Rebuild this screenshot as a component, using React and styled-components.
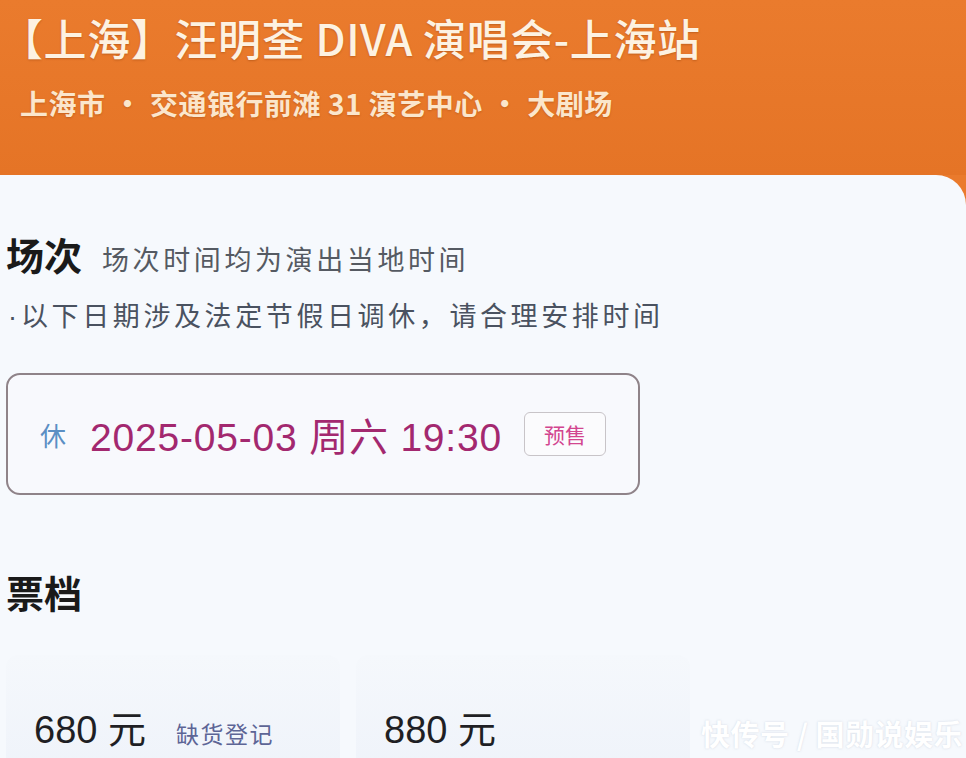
import React from 'react';
import styled, { createGlobalStyle } from 'styled-components';

const GlobalStyle = createGlobalStyle`
  html, body {
    margin: 0;
    padding: 0;
    background: #e9772a;
  }
  body {
    font-family: "Noto Sans CJK SC", "Noto Sans", sans-serif;
  }
`;

const Page = styled.div`
  width: 966px;
  height: 758px;
  overflow: hidden;
  position: relative;
  background: #ea7a2c;
`;

const Header = styled.header`
  height: 175px;
  box-sizing: border-box;
  padding: 7px 0 0 0;
  background: linear-gradient(180deg, #ea7b2d 0%, #e57426 100%);
`;

const Title = styled.h1`
  margin: 0;
  font-size: 43px;
  font-weight: 500;
  line-height: 60px;
  color: #fdf2e2;
  letter-spacing: 0.6px;
  text-shadow: 0 1px 2px rgba(120, 50, 0, 0.35);
`;

const Venue = styled.div`
  margin: 16px 0 0 20px;
  font-size: 28px;
  font-weight: 700;
  line-height: 40px;
  color: #fbe6cc;
  letter-spacing: 0.5px;
  text-shadow: 0 1px 2px rgba(120, 50, 0, 0.3);
`;

const Sep = styled.span`
  margin: 0 8px;
`;

const Card = styled.main`
  height: 583px;
  background: #f6f9fd;
  border-top-right-radius: 30px;
  padding: 54px 0 0 6px;
  box-sizing: border-box;
`;

const SectionRow = styled.div`
  display: flex;
  align-items: baseline;
  gap: 20px;
`;

const SectionTitle = styled.h2`
  margin: 0;
  font-size: 38px;
  font-weight: 700;
  color: #1a1a1a;
  line-height: 50px;
`;

const Hint = styled.span`
  font-size: 27px;
  color: #555a62;
  letter-spacing: 3.6px;
`;

const Notice = styled.p`
  margin: 16px 0 0 2px;
  font-size: 27px;
  color: #4a5260;
  letter-spacing: 3.6px;
  line-height: 40px;
`;

const Dot = styled.span`
  font-family: "Liberation Sans", sans-serif;
  letter-spacing: 0;
  margin-right: 4px;
`;

const Session = styled.div`
  margin-top: 36px;
  width: 634px;
  height: 122px;
  box-sizing: border-box;
  border: 2px solid #8f8389;
  border-radius: 14px;
  display: flex;
  align-items: center;
  padding-left: 32px;
  gap: 24px;
  background: #f8f9fd;
`;

const Rest = styled.span`
  font-size: 26px;
  color: #5b8fc4;
`;

const DateText = styled.span`
  font-family: "Liberation Sans", "Noto Sans CJK SC", sans-serif;
  font-size: 39px;
  color: #a3286f;
  letter-spacing: 0.8px;
`;

const Tag = styled.span`
  margin-left: -2px;
  width: 82px;
  height: 44px;
  box-sizing: border-box;
  border: 1.5px solid #c8c4c8;
  border-radius: 6px;
  display: flex;
  align-items: center;
  justify-content: center;
  font-size: 21px;
  color: #d2458f;
  background: #fbfbfd;
`;

const TierTitle = styled(SectionTitle)`
  margin-top: 72px;
`;

const Tiers = styled.div`
  margin-top: 38px;
  display: flex;
  gap: 16px;
`;

const Tier = styled.div`
  width: 334px;
  height: 120px;
  box-sizing: border-box;
  padding: 44px 0 0 28px;
  border-radius: 12px;
  background: linear-gradient(180deg, #f5f8fc 0%, #eff3fa 100%);
  display: flex;
  align-items: baseline;
  gap: 30px;
`;

const Price = styled.span`
  font-size: 38px;
  color: #1f1f24;
  font-family: "Liberation Sans", "Noto Sans CJK SC", sans-serif;
`;

const Oos = styled.span`
  font-size: 23px;
  color: #5d6596;
  letter-spacing: 1.5px;
`;

const Watermark = styled.div`
  position: absolute;
  right: 3px;
  bottom: 4px;
  font-size: 29px;
  font-weight: 700;
  color: #ffffff;
  letter-spacing: 0.5px;
  text-shadow: 0 0 2px rgba(170, 180, 200, 0.5);
`;

export default function App() {
  return (
    <Page>
      <GlobalStyle />
      <Header>
        <Title>【上海】汪明荃 DIVA 演唱会-上海站</Title>
        <Venue>
          上海市<Sep>·</Sep>交通银行前滩 31 演艺中心<Sep>·</Sep>大剧场
        </Venue>
      </Header>
      <Card>
        <SectionRow>
          <SectionTitle>场次</SectionTitle>
          <Hint>场次时间均为演出当地时间</Hint>
        </SectionRow>
        <Notice>
          <Dot>·</Dot>以下日期涉及法定节假日调休，请合理安排时间
        </Notice>
        <Session>
          <Rest>休</Rest>
          <DateText>2025-05-03 周六 19:30</DateText>
          <Tag>预售</Tag>
        </Session>
        <TierTitle>票档</TierTitle>
        <Tiers>
          <Tier>
            <Price>680 元</Price>
            <Oos>缺货登记</Oos>
          </Tier>
          <Tier>
            <Price>880 元</Price>
          </Tier>
        </Tiers>
      </Card>
      <Watermark>快传号 / 国勋说娱乐</Watermark>
    </Page>
  );
}
